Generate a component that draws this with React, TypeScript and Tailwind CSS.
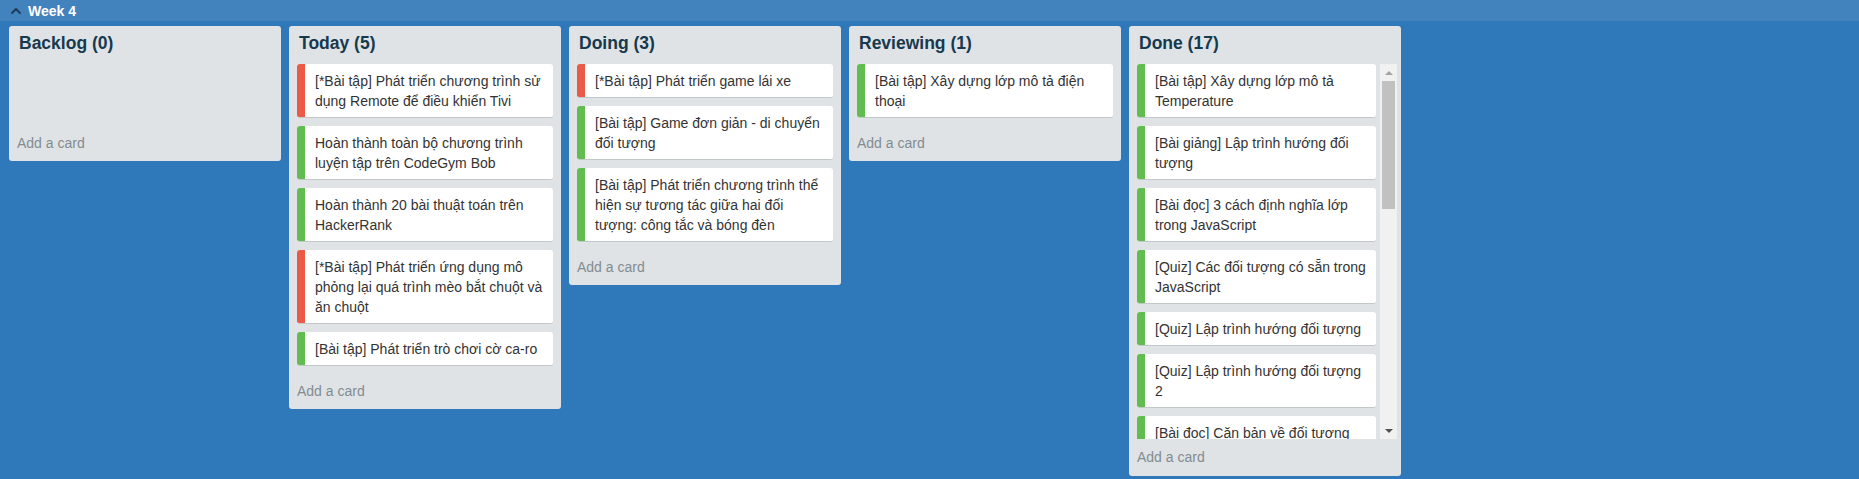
import { ChevronUp } from "lucide-react";

type Card = { color: "red" | "green"; lines: string[] };
type List = { title: string; cards: Card[]; scroll?: boolean };

const g = (...lines: string[]): Card => ({ color: "green", lines });
const r = (...lines: string[]): Card => ({ color: "red", lines });

const lists: List[] = [
  { title: "Backlog (0)", cards: [] },
  {
    title: "Today (5)",
    cards: [
      r("[*Bài tập] Phát triển chương trình sử", "dụng Remote để điều khiển Tivi"),
      g("Hoàn thành toàn bộ chương trình", "luyện tập trên CodeGym Bob"),
      g("Hoàn thành 20 bài thuật toán trên", "HackerRank"),
      r("[*Bài tập] Phát triển ứng dụng mô", "phỏng lại quá trình mèo bắt chuột và", "ăn chuột"),
      g("[Bài tập] Phát triển trò chơi cờ ca-ro"),
    ],
  },
  {
    title: "Doing (3)",
    cards: [
      r("[*Bài tập] Phát triển game lái xe"),
      g("[Bài tập] Game đơn giản - di chuyển", "đối tượng"),
      g("[Bài tập] Phát triển chương trình thể", "hiện sự tương tác giữa hai đối", "tượng: công tắc và bóng đèn"),
    ],
  },
  {
    title: "Reviewing (1)",
    cards: [g("[Bài tập] Xây dựng lớp mô tả điện", "thoại")],
  },
  {
    title: "Done (17)",
    scroll: true,
    cards: [
      g("[Bài tập] Xây dựng lớp mô tả", "Temperature"),
      g("[Bài giảng] Lập trình hướng đối", "tượng"),
      g("[Bài đọc] 3 cách định nghĩa lớp", "trong JavaScript"),
      g("[Quiz] Các đối tượng có sẵn trong", "JavaScript"),
      g("[Quiz] Lập trình hướng đối tượng"),
      g("[Quiz] Lập trình hướng đối tượng", "2"),
      g("[Bài đọc] Căn bản về đối tượng"),
    ],
  },
];

const TaskCard = ({ card }: { card: Card }) => (
  <div className="flex shrink-0 bg-white rounded-[3px] overflow-hidden border-b border-[#c2c7ca]">
    <div className={card.color === "red" ? "w-2 bg-[#eb5a46]" : "w-2 bg-[#61bd4f]"} />
    <div className="pl-[10px] pr-2 pt-[7px] pb-[6px] text-[14px] leading-5 text-[#333]">
      {card.lines.map((l, i) => (
        <div key={i} className="whitespace-nowrap">
          {l}
        </div>
      ))}
    </div>
  </div>
);

const FakeScrollbar = () => (
  <div className="w-[17px] h-full bg-[#f1f1f1] flex flex-col items-center">
    <div className="h-[17px] flex items-center justify-center">
      <div className="w-0 h-0 border-l-[4px] border-r-[4px] border-b-[4px] border-l-transparent border-r-transparent border-b-[#a3a3a3]" />
    </div>
    <div className="w-[13px] h-[128px] bg-[#c1c1c1]" />
    <div className="flex-1" />
    <div className="h-[17px] flex items-center justify-center">
      <div className="w-0 h-0 border-l-[4px] border-r-[4px] border-t-[4px] border-l-transparent border-r-transparent border-t-[#505050]" />
    </div>
  </div>
);

const Column = ({ list }: { list: List }) => (
  <div className="w-[272px] shrink-0 bg-[#dfe3e6] rounded-[3px] flex flex-col">
    <div className="px-[10px] pt-[5px] pb-[9px] text-[17.5px] leading-6 font-bold text-[#17394d]">
      {list.title}
    </div>
    {list.scroll ? (
      <div className="h-[375px] flex pl-2 pr-1">
        <div className="flex-1 overflow-hidden pr-1 flex flex-col gap-2">
          {list.cards.map((c, i) => (
            <TaskCard key={i} card={c} />
          ))}
        </div>
        <FakeScrollbar />
      </div>
    ) : (
      <div className="min-h-[62px] px-2 pb-2 flex flex-col gap-2">
        {list.cards.map((c, i) => (
          <TaskCard key={i} card={c} />
        ))}
      </div>
    )}
    <div className={list.scroll ? "h-[37px] px-2 flex items-center text-[14px] text-[#838c91]" : "h-[35px] px-2 flex items-center text-[14px] text-[#838c91]"}>
      Add a card
    </div>
  </div>
);

export default function App() {
  return (
    <div className="min-h-screen bg-[#2f79ba] font-['Liberation_Sans',Arial,sans-serif]">
      <div className="h-[21px] bg-[#4283bd] flex items-center pl-[8px] gap-[4px]">
        <ChevronUp size={16} strokeWidth={2.75} className="text-[#1d3b57]" />
        <span className="text-white font-bold text-[14px] leading-none">Week 4</span>
      </div>
      <div className="flex items-start gap-2 pl-[9px] pt-[5px]">
        {lists.map((l) => (
          <Column key={l.title} list={l} />
        ))}
      </div>
    </div>
  );
}
